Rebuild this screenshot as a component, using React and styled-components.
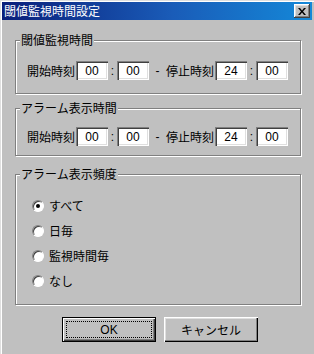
import React from "react";
import styled, { createGlobalStyle } from "styled-components";

const Global = createGlobalStyle`
  html, body { margin: 0; padding: 0; background: #c0c0c0; }
  body { font-family: "Liberation Sans", "Noto Sans CJK JP", sans-serif; font-size: 12px; color: #000; }
  * { box-sizing: border-box; }
`;

const Window = styled.div`
  width: 314px;
  height: 354px;
  background: #c0c0c0;
  box-shadow: inset 1px 1px #dfdfdf, inset 2px 2px #fff;
  padding: 2px 2px 0 2px;
  display: flex;
  flex-direction: column;
  overflow: hidden;
`;

const TitleBar = styled.div`
  height: 18px;
  background: linear-gradient(90deg, #0a1f7a 0%, #1a5cb8 55%, #1488d8 100%);
  display: flex;
  align-items: center;
  justify-content: space-between;
  padding: 0 2px 0 2px;
`;

const TitleText = styled.span`
  color: #fff;
  font-family: "Noto Sans CJK JP", sans-serif;
  font-size: 12px;
  line-height: 14px;
  letter-spacing: 0;
`;

const CloseButton = styled.div`
  width: 16px;
  height: 14px;
  background: #c0c0c0;
  box-shadow: inset -1px -1px #404040, inset 1px 1px #fff, inset -2px -2px #808080, inset 2px 2px #dfdfdf;
  display: flex;
  align-items: center;
  justify-content: center;
`;

const Body = styled.div`
  flex: 1;
  display: flex;
  flex-direction: column;
  padding: 0 11px 0 13px;
`;

const Group = styled.div`
  position: relative;
  margin-top: ${(p) => p.$mt}px;
  height: ${(p) => p.$h}px;
  border: 1px solid #808080;
  box-shadow: inset 1px 1px #fff, 1px 1px #fff;
  padding: ${(p) => p.$pad};
`;

const Legend = styled.span`
  position: absolute;
  left: 4px;
  top: -8px;
  padding: 0 1px 0 1px;
  background: #c0c0c0;
  font-family: "Noto Sans CJK JP", sans-serif;
  font-size: 12px;
  line-height: 14px;
`;

const TimeRow = styled.div`
  display: flex;
  align-items: center;
  height: 19px;
`;

const Label = styled.span`
  font-family: "Noto Sans CJK JP", sans-serif;
  font-size: 12px;
  line-height: 14px;
  white-space: nowrap;
`;

const Field = styled.div`
  width: 32px;
  height: 19px;
  margin-left: ${(p) => p.$ml || 0}px;
  background: #fff;
  box-shadow: inset 1px 1px #808080, inset 2px 2px #404040, inset -1px -1px #fff, inset -2px -2px #dfdfdf;
  display: flex;
  align-items: center;
  justify-content: center;
  font-family: "Liberation Sans", sans-serif;
  font-size: 12px;
  padding-top: 1px;
`;

const Sep = styled.span`
  width: ${(p) => p.$w}px;
  text-align: center;
  font-family: "Liberation Sans", sans-serif;
  font-size: 12px;
`;

const RadioList = styled.div`
  display: flex;
  flex-direction: column;
  gap: 13px;
`;

const RadioRow = styled.div`
  display: flex;
  align-items: center;
  height: 12px;
  gap: 5px;
`;

const RadioCircle = styled.div`
  width: 12px;
  height: 12px;
  border-radius: 50%;
  background: #fff;
  border: 1px solid #808080;
  border-right-color: #fff;
  border-bottom-color: #fff;
  display: flex;
  align-items: center;
  justify-content: center;
  box-shadow: inset 1px 1px #404040;
`;

const Dot = styled.div`
  width: 4px;
  height: 4px;
  border-radius: 50%;
  background: #000;
`;

const ButtonRow = styled.div`
  display: flex;
  justify-content: center;
  gap: 8px;
  margin-top: 12px;
  padding-left: 4px;
`;

const Button = styled.div`
  width: 94px;
  height: 25px;
  background: #c0c0c0;
  display: flex;
  align-items: center;
  justify-content: center;
  font-family: "Liberation Sans", "Noto Sans CJK JP", sans-serif;
  font-size: 12px;
  position: relative;
  border: ${(p) => (p.$default ? "1px solid #000" : "none")};
  box-shadow: ${(p) =>
    p.$default
      ? "inset 1px 1px #fff, inset -1px -1px #404040, inset -2px -2px #808080"
      : "inset 1px 1px #fff, inset -1px -1px #000, inset -2px -2px #808080, inset 2px 2px #dfdfdf"};
`;

const Focus = styled.div`
  position: absolute;
  inset: 3px;
  border: 1px dotted #000;
`;

function XIcon() {
  return (
    <svg width="8" height="7" viewBox="0 0 8 7">
      <path d="M0 0h2l2 2.5L6 0h2L5 3.5 8 7H6L4 4.5 2 7H0l3-3.5z" fill="#000" />
    </svg>
  );
}

function TimeFields() {
  return (
    <TimeRow>
      <Label>開始時刻</Label>
      <Field $ml={1}>00</Field>
      <Sep $w={9}>:</Sep>
      <Field>00</Field>
      <Sep $w={17}>-</Sep>
      <Label>停止時刻</Label>
      <Field $ml={1}>24</Field>
      <Sep $w={9}>:</Sep>
      <Field>00</Field>
    </TimeRow>
  );
}

const options = ["すべて", "日毎", "監視時間毎", "なし"];

export default function App() {
  return (
    <>
      <Global />
      <Window>
        <TitleBar>
          <TitleText>閾値監視時間設定</TitleText>
          <CloseButton>
            <XIcon />
          </CloseButton>
        </TitleBar>
        <Body>
          <Group $mt={20} $h={54} $pad="20px 0 0 11px">
            <Legend>閾値監視時間</Legend>
            <TimeFields />
          </Group>
          <Group $mt={14} $h={48} $pad="18px 0 0 11px">
            <Legend>アラーム表示時間</Legend>
            <TimeFields />
          </Group>
          <Group $mt={18} $h={131} $pad="25px 0 0 16px">
            <Legend>アラーム表示頻度</Legend>
            <RadioList>
              {options.map((o, i) => (
                <RadioRow key={o}>
                  <RadioCircle>{i === 0 && <Dot />}</RadioCircle>
                  <Label>{o}</Label>
                </RadioRow>
              ))}
            </RadioList>
          </Group>
          <ButtonRow>
            <Button $default>
              <Focus />
              OK
            </Button>
            <Button>キャンセル</Button>
          </ButtonRow>
        </Body>
      </Window>
    </>
  );
}
